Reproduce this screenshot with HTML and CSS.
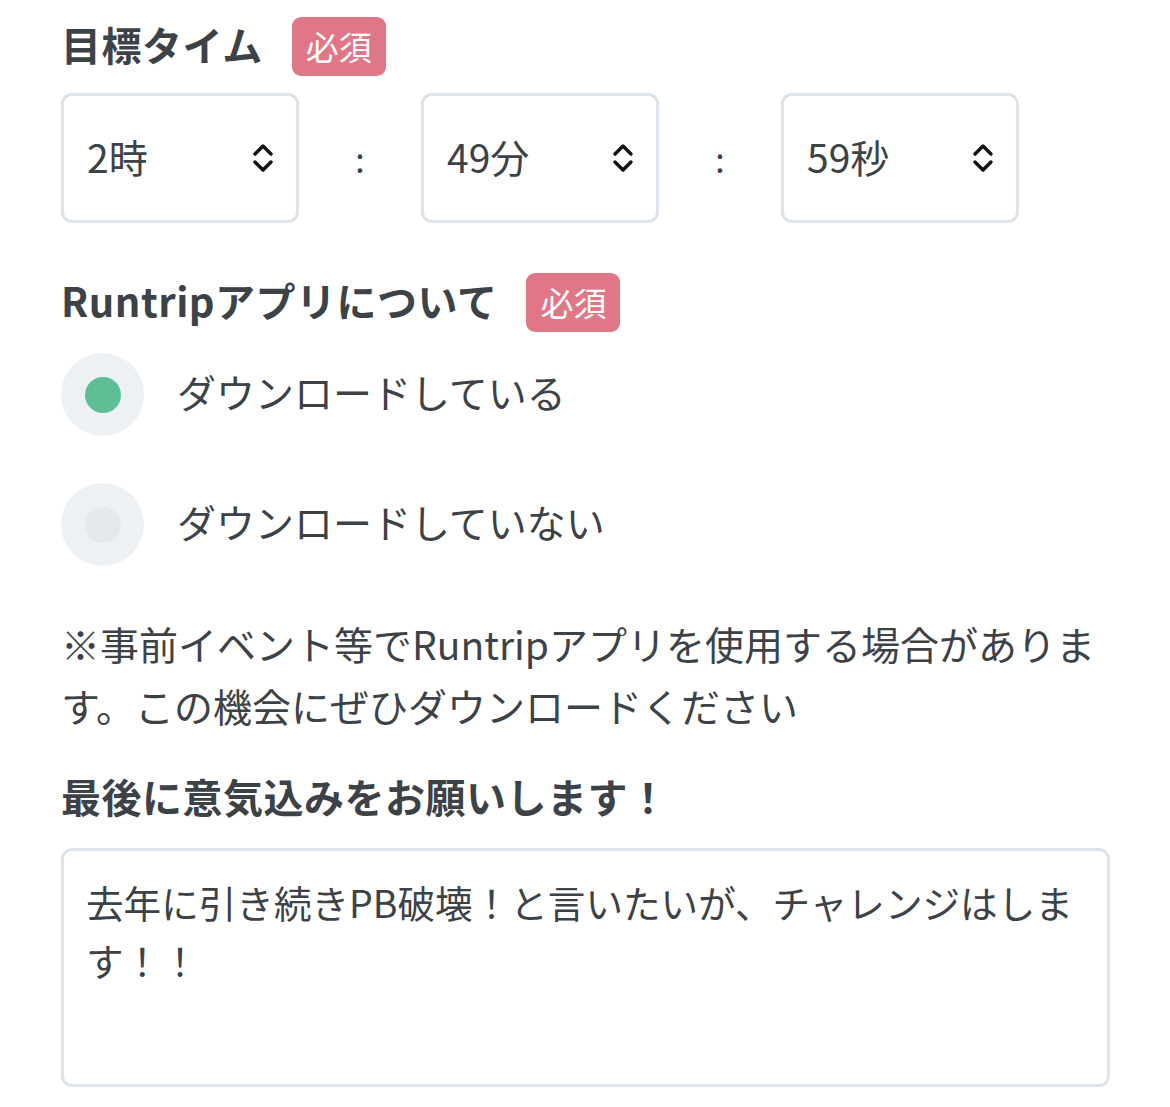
FILE: index.html
```html
<!DOCTYPE html>
<html lang="ja">
<head>
<meta charset="utf-8">
<link rel="stylesheet" href="styles.css">
</head>
<body>
<main class="form">
  <section class="field field-time">
    <div class="label-row">
      <h2 class="label">目標タイム</h2>
      <span class="badge">必須</span>
    </div>
    <div class="time-row">
      <div class="select"><span class="select-value">2時</span><svg class="chev" viewBox="0 0 24 32" width="24" height="32"><path d="M4 12 L12 4 L20 12 M4 20 L12 28 L20 20" fill="none" stroke="#111" stroke-width="3.4" stroke-linecap="round" stroke-linejoin="round"/></svg></div>
      <span class="colon">:</span>
      <div class="select"><span class="select-value">49分</span><svg class="chev" viewBox="0 0 24 32" width="24" height="32"><path d="M4 12 L12 4 L20 12 M4 20 L12 28 L20 20" fill="none" stroke="#111" stroke-width="3.4" stroke-linecap="round" stroke-linejoin="round"/></svg></div>
      <span class="colon">:</span>
      <div class="select"><span class="select-value">59秒</span><svg class="chev" viewBox="0 0 24 32" width="24" height="32"><path d="M4 12 L12 4 L20 12 M4 20 L12 28 L20 20" fill="none" stroke="#111" stroke-width="3.4" stroke-linecap="round" stroke-linejoin="round"/></svg></div>
    </div>
  </section>

  <section class="field field-app">
    <div class="label-row">
      <h2 class="label">Runtripアプリについて</h2>
      <span class="badge">必須</span>
    </div>
    <div class="radios">
      <label class="radio"><span class="radio-outer"><span class="radio-inner checked"></span></span><span class="radio-text">ダウンロードしている</span></label>
      <label class="radio"><span class="radio-outer"><span class="radio-inner"></span></span><span class="radio-text">ダウンロードしていない</span></label>
    </div>
    <p class="note">※事前イベント等でRuntripアプリを使用する場合があります。この機会にぜひダウンロードください</p>
  </section>

  <section class="field field-msg">
    <h2 class="label label-msg">最後に意気込みをお願いします！</h2>
    <div class="textarea">去年に引き続きPB破壊！と言いたいが、チャレンジはします！！</div>
  </section>
</main>
</body>
</html>
```

FILE: styles.css
```css
* { box-sizing: border-box; }
html, body { margin: 0; padding: 0; background: #fff; }
body {
  font-family: "Noto Sans CJK JP", "Noto Sans", sans-serif;
  color: #3d4247;
  width: 1170px;
}
.form {
  padding: 17px 61px 0 61px;
  width: 1170px;
}
.label-row {
  display: flex;
  align-items: center;
  gap: 29px;
}
.label {
  margin: 0;
  font-size: 40px;
  font-weight: 700;
  line-height: 59px;
  letter-spacing: 0.5px;
  color: #3d4247;
  position: relative;
  top: -2px;
}
.badge {
  display: inline-flex;
  align-items: center;
  justify-content: center;
  height: 59px;
  width: 94px;
  background: #e07787;
  color: #fff;
  border-radius: 9px;
  font-size: 33px;
  line-height: 1;
}
.time-row {
  display: flex;
  align-items: center;
  margin-top: 17px;
}
.select {
  width: 238px;
  height: 130px;
  border: 3px solid #dde3ea;
  border-radius: 11px;
  display: flex;
  align-items: center;
  justify-content: space-between;
  padding: 0 21px 0 23px;
}
.select-value {
  font-size: 39px;
  line-height: 1;
  position: relative;
  top: -2px;
}
.chev { display: block; }
.colon {
  width: 122px;
  text-align: center;
  font-size: 34px;
  color: #3d4247;
}
.field-app { margin-top: 50px; }
.radios {
  display: flex;
  flex-direction: column;
  gap: 47px;
  margin-top: 21px;
}
.radio {
  display: flex;
  align-items: center;
  gap: 33px;
}
.radio-outer {
  width: 83px;
  height: 83px;
  border-radius: 50%;
  background: #eef1f4;
  display: flex;
  align-items: center;
  justify-content: center;
}
.radio-inner {
  width: 36px;
  height: 36px;
  border-radius: 50%;
  background: #e4e8ec;
}
.radio-inner.checked { background: #5ebf96; }
.radio-text {
  font-size: 39px;
  line-height: 1;
  position: relative;
  top: -3px;
}
.note {
  margin: 46px 0 0 0;
  font-size: 39px;
  line-height: 62px;
  width: 1048px;
}
.field-msg { margin-top: 33px; }
.textarea {
  margin-top: 20px;
  width: 1049px;
  height: 239px;
  border: 3px solid #dde3ea;
  border-radius: 11px;
  padding: 22px 20px 22px 22px;
  font-size: 37.6px;
  line-height: 58px;
}
```
